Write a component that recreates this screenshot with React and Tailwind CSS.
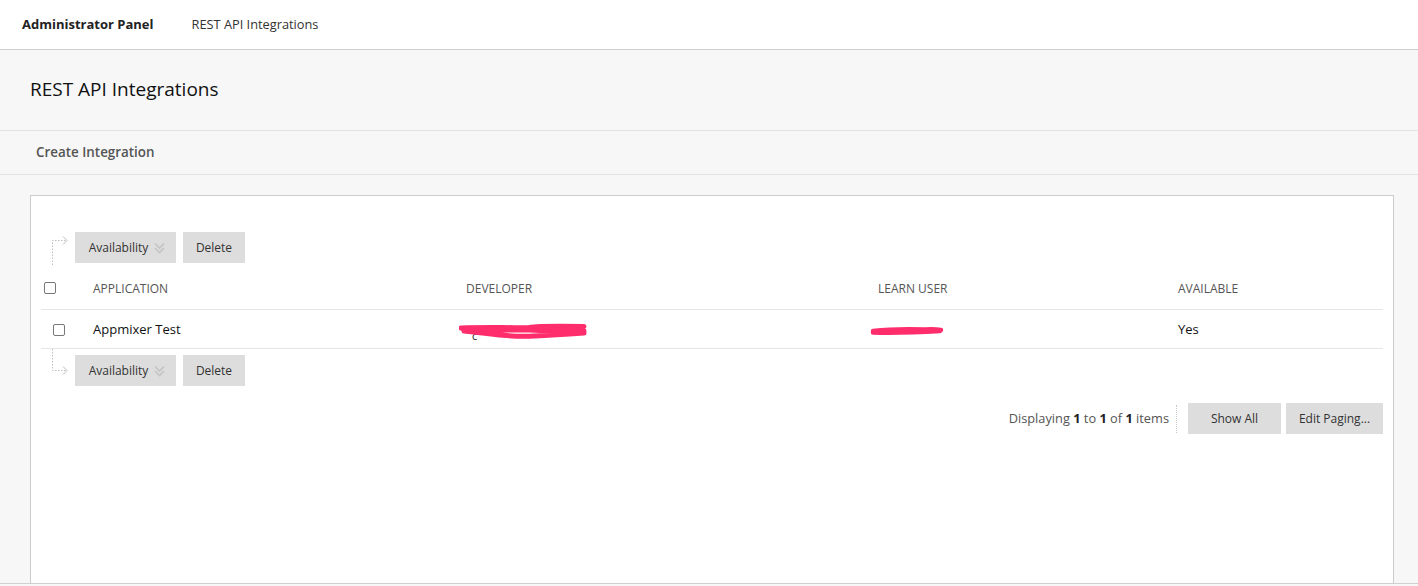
import React from 'react';

const font = { fontFamily: '"Open Sans", "Liberation Sans", sans-serif' };

const Arrow = ({ up }) => (
  <svg width="34" height="40" viewBox="0 0 34 40" className="shrink-0">
    {up ? (
      <g fill="none" stroke="#bdbdbd" strokeWidth="1" strokeDasharray="1.5 1.5">
        <path d="M11.5 40 V15.5 H25" />
        <path d="M22 11.5 L26 15.5 L22 19.5" strokeDasharray="none" />
      </g>
    ) : (
      <g fill="none" stroke="#bdbdbd" strokeWidth="1" strokeDasharray="1.5 1.5">
        <path d="M11.5 0 V21.5 H25" />
        <path d="M22 17.5 L26 21.5 L22 25.5" strokeDasharray="none" />
      </g>
    )}
  </svg>
);

const DoubleChevron = () => (
  <svg width="11" height="12" viewBox="0 0 11 12" className="ml-[6px]">
    <path d="M1 1.5 L5.5 6 L10 1.5 M1 6 L5.5 10.5 L10 6" fill="none" stroke="#c4c4c4" strokeWidth="1.6" />
  </svg>
);

const Btn = ({ children, className = '' }) => (
  <button className={`h-[31px] bg-[#dddddd] text-[12px] text-[#333] flex items-center justify-center ${className}`}>
    {children}
  </button>
);

const Toolbar = ({ up }) => (
  <div className={`flex ${up ? 'items-end' : 'items-start'} h-[40px]`}>
    <Arrow up={up} />
    <div className={`flex gap-[7px] ${up ? 'mb-[2px]' : 'mt-[6px]'}`}>
      <Btn className="w-[101px] text-[11.5px] pl-[3px]">Availability<DoubleChevron /></Btn>
      <Btn className="w-[62px] text-[11.5px]">Delete</Btn>
    </div>
  </div>
);

const Check = ({ className = '' }) => (
  <span className={`block w-[12px] h-[12px] border border-[#777] rounded-[2px] bg-white ${className}`} />
);

export default function App() {
  return (
    <div style={font} className="w-[1418px] h-[586px] overflow-hidden bg-[#f7f7f7] flex flex-col text-[#222]">
      <div className="h-[50px] bg-white border-b border-[#cfcfcf] flex items-center shrink-0">
        <span className="ml-[22px] text-[13px] font-bold text-[#222]">Administrator Panel</span>
        <span className="ml-[38px] text-[12.8px] text-[#333]">REST API Integrations</span>
      </div>

      <div className="h-[81px] flex items-center border-b border-[#e3e3e3] shrink-0">
        <h1 className="ml-[30px] text-[19px] text-[#111] mt-[-2px]">REST API Integrations</h1>
      </div>

      <div className="h-[44px] flex items-center border-b border-[#e3e3e3] shrink-0">
        <span className="ml-[36px] text-[13.4px] font-semibold text-[#555]">Create Integration</span>
      </div>

      <div className="flex-1 pl-[30px] pr-[24px] pt-[20px] min-h-0 border-b border-[#cfcfcf] mb-[2px]">
        <div className="h-full bg-white border border-[#cccccc] border-b-0 px-[10px] pt-[29px]">
          <Toolbar up />

          <div className="grid grid-cols-[52px_373px_412px_300px_1fr] items-center h-[45px] pt-[3px] border-b border-[#e6e6e6] text-[12px] text-[#555]">
            <div><Check className="ml-[3px] mt-[-2px]" /></div>
            <div>APPLICATION</div>
            <div>DEVELOPER</div>
            <div>LEARN USER</div>
            <div>AVAILABLE</div>
          </div>

          <div className="grid grid-cols-[52px_373px_412px_300px_1fr] items-center h-[39px] pt-[2px] border-b border-[#e6e6e6] text-[13px] text-[#111]">
            <div><Check className="ml-[12px]" /></div>
            <div>Appmixer Test</div>
            <div className="relative h-full">
              <span className="absolute left-[6px] top-[18px] text-[11px] text-[#222] leading-none">c</span>
              <svg width="140" height="24" viewBox="0 0 140 24" className="absolute left-[-7px] top-[7px]">
                <path d="M2 9 C30 8 50 9 70 8.5 C80 7 100 7 125 7.5 M4 10 C30 11 50 11 70 11 C90 12 110 12 125 12 M5 12 C30 14 50 19 75 17 C95 16 110 15 125 14" fill="none" stroke="#ff2d6b" strokeWidth="5" strokeLinecap="round" />
              </svg>
            </div>
            <div className="relative h-full">
              <svg width="80" height="20" viewBox="0 0 80 20" className="absolute left-[-8px] top-[9px]">
                <path d="M3 10 C20 8 40 8 55 8.5 C62 8 68 8.5 71 9 M3 11.5 C25 12 45 11.5 70 10" fill="none" stroke="#ff2d6b" strokeWidth="4.5" strokeLinecap="round" />
              </svg>
            </div>
            <div>Yes</div>
          </div>

          <Toolbar />

          <div className="flex items-center justify-end mt-[14px] h-[31px]">
            <span className="text-[12.8px] text-[#555]">
              Displaying <b className="text-[#222]">1</b> to <b className="text-[#222]">1</b> of <b className="text-[#222]">1</b> items
            </span>
            <span className="ml-[7px] h-[28px] border-l border-dotted border-[#c8c8c8]" />
            <Btn className="ml-[11px] w-[93px]">Show All</Btn>
            <Btn className="ml-[5px] w-[97px]">Edit Paging...</Btn>
          </div>
        </div>
      </div>
    </div>
  );
}
